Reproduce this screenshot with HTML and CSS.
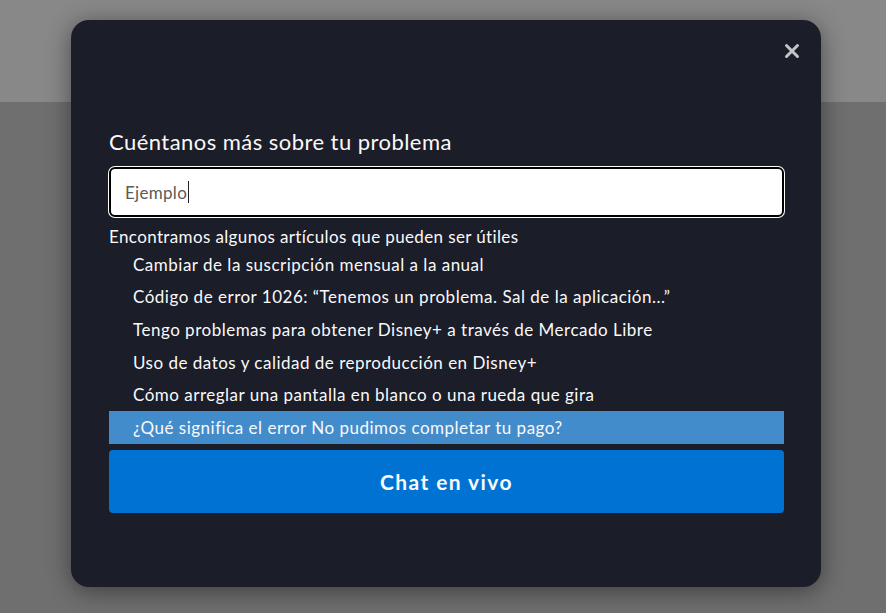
FILE: index.html
```html
<!DOCTYPE html>
<html lang="es">
<head>
<meta charset="utf-8">
<title>Ayuda</title>
<link rel="stylesheet" href="styles.css">
</head>
<body>
<div class="page">
  <div class="topband"></div>
  <div class="overlay">
    <div class="modal">
      <button class="close" aria-label="Cerrar">
        <svg width="16" height="16" viewBox="0 0 16 16"><path d="M2.5 2.5L13.5 13.5M13.5 2.5L2.5 13.5" stroke="#c4c5c9" stroke-width="3" stroke-linecap="round"/></svg>
      </button>
      <h2 class="title">Cuéntanos más sobre tu problema</h2>
      <div class="field"><span class="value">Ejemplo</span><span class="caret"></span></div>
      <p class="found">Encontramos algunos artículos que pueden ser útiles</p>
      <ul class="articles">
        <li>Cambiar de la suscripción mensual a la anual</li>
        <li>Código de error 1026: “Tenemos un problema. Sal de la aplicación...”</li>
        <li>Tengo problemas para obtener Disney+ a través de Mercado Libre</li>
        <li>Uso de datos y calidad de reproducción en Disney+</li>
        <li>Cómo arreglar una pantalla en blanco o una rueda que gira</li>
        <li class="active">¿Qué significa el error No pudimos completar tu pago?</li>
      </ul>
      <button class="chat">Chat en vivo</button>
    </div>
  </div>
</div>
</body>
</html>
```
FILE: styles.css
```css
* { box-sizing: border-box; }
html, body { margin: 0; padding: 0; }
body {
  width: 886px;
  height: 613px;
  overflow: hidden;
  background: #6f6f6f;
  font-family: Lato, "Noto Sans", sans-serif;
}
.page {
  position: relative;
  width: 886px;
  height: 613px;
}
.topband {
  height: 102px;
  background: #888888;
}
.overlay {
  position: absolute;
  left: 0;
  top: 0;
  width: 886px;
  height: 613px;
  padding: 20px 0 0 71px;
}
.modal {
  position: relative;
  width: 750px;
  height: 567px;
  background: #1b1d29;
  border-radius: 18px;
  box-shadow: 0 4px 24px rgba(0,0,0,0.45);
  padding: 107px 37px 0 38px;
  color: #f9f9f9;
}
.close {
  position: absolute;
  top: 22px;
  right: 20px;
  width: 18px;
  height: 18px;
  padding: 0;
  border: 0;
  background: none;
  display: flex;
  align-items: center;
  justify-content: center;
}
.title {
  margin: 0;
  font-size: 22px;
  font-weight: 400;
  line-height: 30px;
  letter-spacing: 0.45px;
}
.field {
  margin-top: 10px;
  height: 50px;
  background: #ffffff;
  border: 2px solid #000;
  border-radius: 6px;
  box-shadow: 0 0 0 1px #ffffff;
  display: flex;
  align-items: center;
  padding-left: 14px;
  font-size: 17px;
  letter-spacing: 0.3px;
  color: #5a5a5a;
}
.caret {
  display: inline-block;
  width: 1px;
  height: 22px;
  background: #222;
  margin-left: 1px;
}
.found {
  margin: 9px 0 0;
  font-size: 17px;
  line-height: 22px;
  letter-spacing: 0.37px;
}
.articles {
  list-style: none;
  margin: 0;
  padding: 0;
}
.articles li {
  height: 32.6px;
  display: flex;
  align-items: center;
  padding-left: 24px;
  font-size: 17px;
  letter-spacing: 0.5px;
}
.articles li.active {
  background: #438ccc;
}
.chat {
  display: block;
  width: 100%;
  height: 63px;
  margin-top: 6px;
  border: 0;
  border-radius: 4px;
  background: #0072d2;
  color: #f9f9f9;
  font-family: Lato, "Noto Sans", sans-serif;
  font-size: 21px;
  font-weight: 700;
  letter-spacing: 1.4px;
}
```
